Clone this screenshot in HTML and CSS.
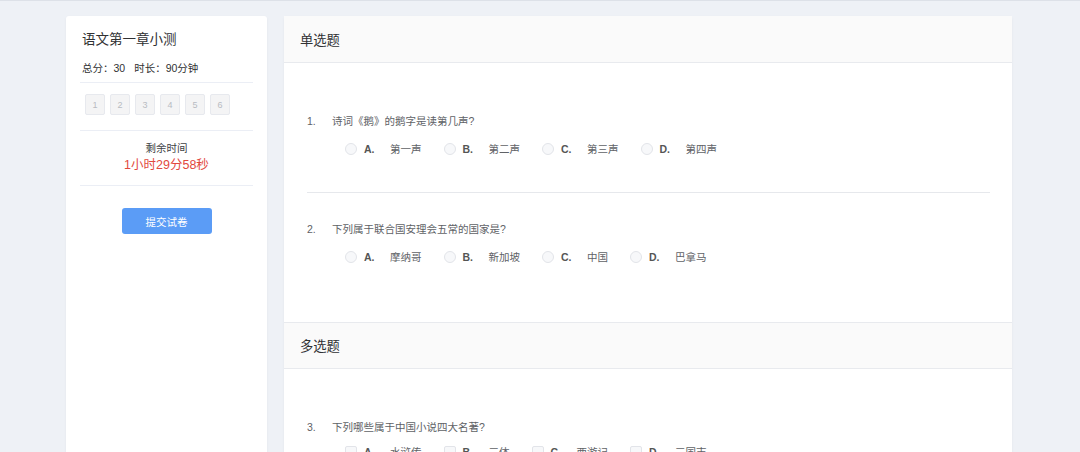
FILE: index.html
```html
<!DOCTYPE html>
<html lang="zh-CN">
<head>
<meta charset="utf-8">
<title>语文第一章小测</title>
<link rel="stylesheet" href="styles.css">
</head>
<body>
<div class="page">
  <aside class="side">
    <div class="side-title">语文第一章小测</div>
    <div class="side-info"><span>总分：30</span><span>时长：90分钟</span></div>
    <div class="side-sec nums">
      <span class="num">1</span><span class="num">2</span><span class="num">3</span><span class="num">4</span><span class="num">5</span><span class="num">6</span>
    </div>
    <div class="side-sec timer">
      <div class="timer-label">剩余时间</div>
      <div class="timer-val">1小时29分58秒</div>
    </div>
    <div class="side-sec submit">
      <button class="btn">提交试卷</button>
    </div>
  </aside>
  <main class="paper">
    <section class="part">
      <div class="part-head">单选题</div>
      <div class="part-body">
        <div class="q">
          <div class="q-title"><span class="q-no">1.</span>诗词《鹅》的鹅字是读第几声?</div>
          <div class="opts">
            <label class="opt"><span class="radio"></span><span class="letter">A.</span>第一声</label>
            <label class="opt"><span class="radio"></span><span class="letter">B.</span>第二声</label>
            <label class="opt"><span class="radio"></span><span class="letter">C.</span>第三声</label>
            <label class="opt"><span class="radio"></span><span class="letter">D.</span>第四声</label>
          </div>
        </div>
        <div class="q">
          <div class="q-title"><span class="q-no">2.</span>下列属于联合国安理会五常的国家是?</div>
          <div class="opts">
            <label class="opt"><span class="radio"></span><span class="letter">A.</span>摩纳哥</label>
            <label class="opt"><span class="radio"></span><span class="letter">B.</span>新加坡</label>
            <label class="opt"><span class="radio"></span><span class="letter">C.</span>中国</label>
            <label class="opt"><span class="radio"></span><span class="letter">D.</span>巴拿马</label>
          </div>
        </div>
      </div>
    </section>
    <section class="part">
      <div class="part-head">多选题</div>
      <div class="part-body">
        <div class="q">
          <div class="q-title"><span class="q-no">3.</span>下列哪些属于中国小说四大名著?</div>
          <div class="opts multi">
            <label class="opt"><span class="check"></span><span class="letter">A.</span>水浒传</label>
            <label class="opt"><span class="check"></span><span class="letter">B.</span>三体</label>
            <label class="opt"><span class="check"></span><span class="letter">C.</span>西游记</label>
            <label class="opt"><span class="check"></span><span class="letter">D.</span>三国志</label>
          </div>
        </div>
      </div>
    </section>
  </main>
</div>
</body>
</html>
```
FILE: styles.css
```css
* { box-sizing: border-box; }
html, body { margin: 0; height: 100%; }
body {
  background: #eef1f6;
  border-top: 1px solid #dde1e8;
  font-family: "Liberation Sans", "Noto Sans CJK SC", sans-serif;
  color: #606266;
  overflow: hidden;
}
.page {
  display: flex;
  align-items: flex-start;
  gap: 17px;
  padding: 15px 0 0 66px;
}
.side {
  width: 201px;
  height: 480px;
  background: #fff;
  border-radius: 3px;
  box-shadow: 0 1px 3px rgba(0, 0, 0, 0.05);
  padding: 16px 14px;
}
.side-title {
  font-size: 13.5px;
  line-height: 16px;
  color: #303133;
  padding: 0 2px;
}
.side-info {
  margin-top: 12px;
  font-size: 10.5px;
  line-height: 16px;
  color: #303133;
  padding: 0 2px 6px;
  display: flex;
  gap: 9px;
}
.side-sec { border-top: 1px solid #ebeef5; }
.nums {
  display: flex;
  gap: 5px;
  padding: 11px 5px 15px;
}
.num {
  width: 20px;
  height: 21px;
  border: 1px solid #e7e9ee;
  background: #f4f4f5;
  border-radius: 2px;
  color: #b8bbc2;
  font-size: 9px;
  display: flex;
  align-items: center;
  justify-content: center;
}
.timer {
  text-align: center;
  padding: 9px 0 11px;
}
.timer-label {
  font-size: 10.5px;
  line-height: 16px;
  color: #404246;
}
.timer-val {
  font-size: 12.5px;
  line-height: 18px;
  color: #e2483d;
}
.submit {
  display: flex;
  justify-content: center;
  padding-top: 22px;
}
.btn {
  width: 90px;
  height: 26px;
  border: 0;
  border-radius: 3px;
  background: #5b9cf6;
  color: #fff;
  font-family: inherit;
  font-size: 10.5px;
  padding: 0;
}
.paper {
  width: 728px;
  background: #fff;
  border-radius: 3px;
  box-shadow: 0 1px 3px rgba(0, 0, 0, 0.05);
}
.part-head {
  height: 47px;
  display: flex;
  align-items: center;
  padding: 0 16px;
  background: #fafafa;
  border-bottom: 1px solid #e8eaee;
  font-size: 13.3px;
  color: #303133;
}
.part + .part .part-head { border-top: 1px solid #e8eaee; }
.part-body { padding: 22px 22px 22px 23px; }
.q { padding: 26px 0 33px; }
.q + .q { border-top: 1px solid #e6e8ec; }
.q-title {
  font-size: 10.5px;
  line-height: 20px;
  color: #606266;
}
.q-no { display: inline-block; width: 25px; }
.opts {
  display: flex;
  margin-top: 8px;
  padding-left: 38px;
  font-size: 10.5px;
  line-height: 20px;
  color: #606266;
}
.opts.multi { margin-top: 5px; }
.opt {
  display: flex;
  align-items: center;
  margin-right: 22px;
}
.radio, .check {
  width: 12px;
  height: 12px;
  border: 1px solid #e2e4e9;
  background: #f7f8fa;
  margin-right: 7px;
}
.radio { border-radius: 50%; }
.check { border-radius: 2px; }
.letter {
  display: inline-block;
  width: 26px;
  font-weight: bold;
  color: #555;
}
```
